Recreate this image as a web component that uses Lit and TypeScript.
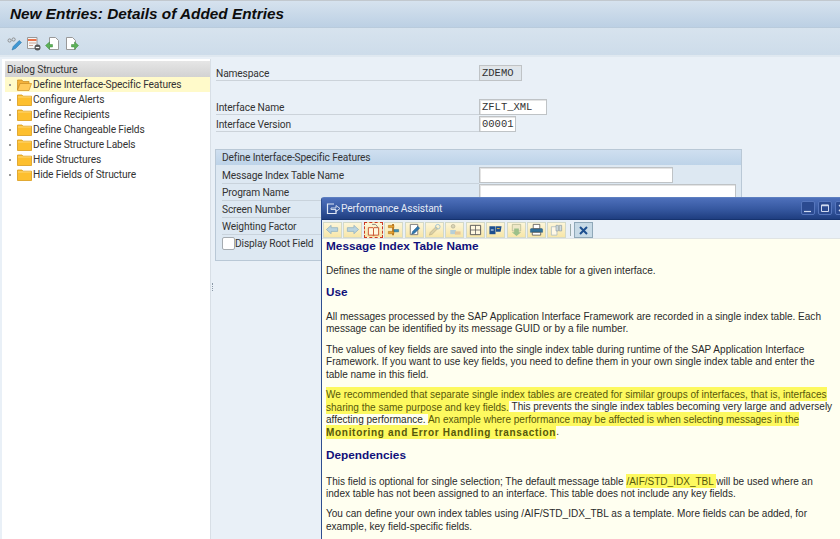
import { LitElement, html, css, svg } from "lit";
import { customElement } from "lit/decorators.js";

const folder = (open = false) => html`<svg class="folder" width="15" height="12" viewBox="0 0 15 12">
  ${open
    ? svg`<path d="M.5 2.500V1h4.500l1 1.500h6v2H3L.5 11z" fill="#f3b23c" stroke="#c98a1e" stroke-width=".7"/><path d="M3 4.500H14.500L12 11.500H.5z" fill="#ffca5c" stroke="#cf8f22" stroke-width=".7"/>`
    : svg`<path d="M.5 1h4.500l1 1.200h8.500v9.300H.5z" fill="#fdbf2e" stroke="#d99a1a" stroke-width=".8"/><path d="M1 3h13" stroke="#ffe08a" stroke-width=".8"/>`}
</svg>`;

const tbIcons = [
  svg`<path d="M1 4.500a1.600 1.600 0 1 1 3.200 0a1.600 1.600 0 1 1-3.200 0M5 3.500a1.600 1.600 0 1 1 3.200 0a1.600 1.600 0 1 1-3.200 0" fill="none" stroke="#888" stroke-width=".9"/><path d="M5 14l1.200-3.500 6-6 2.300 2-6 6z" fill="#3f97d3" stroke="#2a6f9f" stroke-width=".5"/>`,
  svg`<path d="M1.500 1.500h9.500v11H1.500z" fill="#f6f6f6" stroke="#999"/><path d="M2 3h8.500v2H2z" fill="#e9734a"/><path d="M3 7h7M3 9.500h4" stroke="#c9a292"/><circle cx="11.500" cy="11.500" r="3" fill="#555"/><path d="M9.800 11.500h3.400" stroke="#fff" stroke-width="1.200"/>`,
  svg`<path d="M4.500 1.500h6l3 3v9h-9z" fill="#fff" stroke="#999"/><path d="M.5 9.500l4-3.500v2.500h3V11h-3v2.500z" fill="#5cb158" stroke="#3f8a3b" stroke-width=".5"/>`,
  svg`<path d="M2.500 1.500h6l3 3v9h-9z" fill="#fff" stroke="#999"/><path d="M14.500 9.500l-4-3.500v2.500h-3V11h3v2.500z" fill="#5cb158" stroke="#3f8a3b" stroke-width=".5"/>`,
];

const pa = [
  svg`<path d="M1 7l5-4.500V5h7v4H6v2.500z" fill="#b9d3df" stroke="#8fb0c0" stroke-width=".8"/>`,
  svg`<path d="M14 7L9 2.500V5H2v4h7v2.500z" fill="#b9d3df" stroke="#8fb0c0" stroke-width=".8"/>`,
  svg`<path d="M2 5h5l.5 1 .5-1h5v8H8l-.5 1-.5-1H2z" fill="#fff8e0" stroke="#c8502c"/><path d="M7.500 6v7" stroke="#c8502c"/><path d="M6 1.500h3.500l2 2V5" fill="none" stroke="#666" stroke-width=".8"/>`,
  svg`<path d="M6 1h2v12H6z" fill="#b97722"/><path d="M2 2.500h6v2.500H2z" fill="#e8a02c" stroke="#9a6414" stroke-width=".5"/><path d="M8 7h5v2.500H8z" fill="#3f8fb5" stroke="#20617f" stroke-width=".5"/><path d="M2 9h6v2.500H2z" fill="#e8a02c" stroke="#9a6414" stroke-width=".5"/>`,
  svg`<path d="M3 1.500h8v11H3z" fill="#fff" stroke="#777"/><path d="M4.500 12l1-3L11 3.500 13 5.500 7.500 11z" fill="#2f76ad" stroke="#1d4f79" stroke-width=".5"/>`,
  svg`<path d="M2 13l1-3 6-6 2 2-6 6z" fill="#d8cfa8" stroke="#b7a97a" stroke-width=".6"/><circle cx="11" cy="4" r="2.500" fill="none" stroke="#9fc2d2"/>`,
  svg`<circle cx="6" cy="3.500" r="2" fill="#d8d4b8" stroke="#a8a488" stroke-width=".6"/><path d="M3 12V7.500h6V12z" fill="#b6cfd8"/><rect x="8" y="9" width="6" height="3.500" fill="#e6c89a"/>`,
  svg`<path d="M2 2.500h11v10H2z" fill="#fff8e0" stroke="#555"/><path d="M7.500 2.500v10M2 7.500h11" stroke="#555" stroke-width=".8"/>`,
  svg`<path d="M1 3.500h6.500v8.500H1z" fill="#1d4f8f"/><path d="M8 3.500h6l-1 6H8z" fill="#1d4f8f"/><path d="M2.500 7.500h3" stroke="#fff"/><path d="M9 6h3" stroke="#f1c24a"/>`,
  svg`<path d="M3 1.500h9v7H3z" fill="#eee8c8" stroke="#a9b08a" stroke-width=".7"/><path d="M5 6h5v4h2.500L7.500 14 2.500 10H5z" fill="#9cc08a"/>`,
  svg`<path d="M2 6h11a1 1 0 0 1 1 1v3H1V7a1 1 0 0 1 1-1z" fill="#2f6f9a" stroke="#1d4f79" stroke-width=".5"/><path d="M4 1.500h7V6H4z" fill="#fff" stroke="#333" stroke-width=".7"/><path d="M3 10h9v3H3z" fill="#fff" stroke="#333" stroke-width=".7"/>`,
  svg`<path d="M2 4h6v9H2z" fill="#fff8e6" stroke="#a8b8c0" stroke-width=".8"/><path d="M7 2.500h2.500v6H7zM10.500 2.500H13v6h-2.500z" fill="#d2dde2" stroke="#8a9aa2" stroke-width=".7"/>`,
];

@customElement("app-root")
export class AppRoot extends LitElement {
  static styles = css`
    :host { display: block; position: relative; width: 840px; height: 539px; overflow: hidden; background: #e9f0f7;
      font-family: Roboto, "Noto Sans", sans-serif; letter-spacing: -.14px; color: #2b2b2b; }
    .title { height: 28px; padding-left: 10px; box-sizing: border-box; display: flex; align-items: center;
      background: linear-gradient(#d6e2ee, #bcd0e4); border-top: 1px solid #c2c8ce; border-bottom: 1px solid #b9cbdc;
      font: italic bold 15.350px "Liberation Sans", Arial, sans-serif; letter-spacing: 0; color: #0d0d0d; }
    .toolbar { height: 29px; box-sizing: border-box; padding: 3px 0 0 7px; display: flex; align-items: center; gap: 4px;
      background: linear-gradient(#d7e3ee, #cddcea); border-bottom: 2px solid #dfe8f0; }
    .toolbar svg { display: block; }
    .body { display: flex; height: 482px; padding-top: 2px; box-sizing: border-box; }
    .tree { width: 209px; margin-left: 2px; background: #fff; box-sizing: border-box; border-right: 1px solid #d8dfe6; font-size: 10.200px; }
    .tree-head { height: 16px; margin: 2px 0 0 3px; padding-left: 2px; background: linear-gradient(#e6e6e6, #d2d2d2); display: flex; align-items: center; color: #333; }
    .node { height: 15px; margin-left: 3px; display: flex; align-items: center; white-space: nowrap; color: #333; }
    .node.sel { background: #fffaca; }
    .dot { width: 2px; height: 2px; background: #9a9a9a; margin: 0 6px 0 4px; flex: none; }
    .folder { margin-right: 1px; flex: none; }
    .split { width: 4px; display: flex; align-items: center; justify-content: center; }
    .grip { width: 1px; height: 8px; margin-top: -24px; border-left: 1px dotted #8a98a6; }
    .main { flex: 1; padding: 5px 0 0 1px; font-size: 10.200px; }
    .row { height: 17px; box-sizing: border-box; display: flex; align-items: flex-end; }
    .lab { width: 263px; height: 17px; box-sizing: border-box; border-bottom: 1px solid #ccd3da; display: flex; align-items: center; padding-top: 2px; white-space: nowrap; color: #333; }
    .gap { height: 17px; }
    .f { box-sizing: border-box; height: 16px; background: #fff; border: 1px solid #bfc3c6; font: 10.500px "Liberation Mono", monospace; letter-spacing: 0; padding-left: 2px; display: flex; align-items: center; color: #333; box-shadow: inset 1px 1px 0 #e4e4e4; }
    .f.ro { background: #dfe6ec; }
    .group { margin: 17px 0 0 -1px; width: 527px; height: 112px; box-sizing: border-box; border: 1px solid #b9c8d6; background: #dde8f2; }
    .g-head { height: 15px; background: linear-gradient(#cfdff0, #bdd3e8); padding-left: 6px; display: flex; align-items: center; color: #333; }
    .g-rows { padding: 2px 0 0 0; }
    .g-row { height: 17px; box-sizing: border-box; display: flex; }
    .g-lab { box-sizing: border-box; margin-left: 6px; width: 257px; height: 17px; border-bottom: 1px solid #c9d3dc; display: flex; align-items: center; white-space: nowrap; color: #333; }
    .check { width: 11px; height: 11px; border: 1px solid #a5abb0; border-radius: 2px; background: #fff; margin-right: 0; flex: none; }
    .g-lab.nb { border-bottom: 0; }

    .popup { position: absolute; left: 321px; top: 197px; width: 530px; height: 342px; box-sizing: border-box; background: #e9f0f7;
      border-left: 1px solid #2f4f8f; border-top: 1px solid #5d7fc0; border-top-left-radius: 3px; display: flex; flex-direction: column; }
    .p-title { height: 22px; flex: none; box-sizing: border-box; border-bottom: 1px solid #16336f; background: linear-gradient(#4e70bb, #35579f 55%, #1f3e80); display: flex; align-items: center; padding-left: 4px; color: #e4eaf5; font-size: 10.200px; position: relative; }
    .btns { position: absolute; left: 479px; top: 3px; display: flex; gap: 3px; }
    .wbtn { width: 14px; height: 14px; box-sizing: border-box; border: 1px solid #5676bd; border-radius: 2px; background: #2b4a90; display: flex; align-items: center; justify-content: center; }
    .p-tools { height: 18px; flex: none; display: flex; align-items: flex-end; padding-left: 1px; background: #e9f0f7; }
    .pb { width: 19px; height: 16px; box-sizing: border-box; background: linear-gradient(#fdf6da, #f7e6a8); border: 1px solid #d3d9c8; margin-right: 1.400px; display: flex; align-items: center; justify-content: center; flex: none; }
    .pb.act { border: 1px dashed #cc3a24; }
    .pb.close { background: #c7dae6; border: 1px solid #8fa8b8; margin-left: 3px; }
    .sep { width: 1px; height: 12px; background: #9aa; margin: 0 0 2px 2px; }
    .p-body { flex: 1; background: #fffff0; border-top: 1px solid #e0e4e4; padding: 0 0 0 4px; font: 10.040px/12.400px "Liberation Sans", Arial, sans-serif; letter-spacing: 0; color: #2a2a2a; }
    h2 { margin: 0 0 11px; font: bold 11.800px/15px "Liberation Sans", Arial, sans-serif; color: #10107a; }
    h2.mid { margin: 6px 0 10.500px; }
    h2.big { margin: 9.500px 0 12.500px; }
    p { margin: 0 0 8px; width: 509px; }
    mark { background: #fdf95f; color: #57570a; padding: 1.500px 0; box-decoration-break: clone; }
    mark b { letter-spacing: .68px; }
  `;

  render() {
    const nodes = [
      "Define Interface-Specific Features", "Configure Alerts", "Define Recipients",
      "Define Changeable Fields", "Define Structure Labels", "Hide Structures", "Hide Fields of Structure",
    ];
    return html`
      <div class="title">New Entries: Details of Added Entries</div>
      <div class="toolbar">
        ${tbIcons.map((d) => html`<svg width="15" height="15" viewBox="0 0 15 15">${d}</svg>`)}
      </div>
      <div class="body">
        <div class="tree">
          <div class="tree-head">Dialog Structure</div>
          ${nodes.map((n, i) => html`<div class="node ${i === 0 ? "sel" : ""}"><i class="dot"></i>${folder(i === 0)}<span>${n}</span></div>`)}
        </div>
        <div class="split"><i class="grip"></i></div>
        <div class="main">
          <div class="row"><div class="lab">Namespace</div><div class="f ro" style="width:43px">ZDEMO</div></div>
          <div class="gap"></div>
          <div class="row"><div class="lab">Interface Name</div><div class="f" style="width:68px">ZFLT_XML</div></div>
          <div class="row"><div class="lab">Interface Version</div><div class="f" style="width:37px">00001</div></div>
          <div class="group">
            <div class="g-head">Define Interface-Specific Features</div>
            <div class="g-rows">
              <div class="g-row"><div class="g-lab">Message Index Table Name</div><div class="f" style="width:194px"></div></div>
              <div class="g-row"><div class="g-lab">Program Name</div><div class="f" style="width:257px"></div></div>
              <div class="g-row"><div class="g-lab">Screen Number</div></div>
              <div class="g-row"><div class="g-lab">Weighting Factor</div></div>
              <div class="g-row"><div class="g-lab nb"><i class="check"></i>Display Root Field</div></div>
            </div>
          </div>
        </div>
      </div>
      <div class="popup">
        <div class="p-title">
          <svg width="15" height="13" viewBox="0 0 15 13"><path d="M8 2H1.500v9.500H10V8" fill="none" stroke="#dfe7f5" stroke-width="1.200"/><path d="M5 6h5V3.500L14 6.500 10 9.500V7.500H5z" fill="none" stroke="#dfe7f5" stroke-width=".9"/></svg>
          <span>Performance Assistant</span>
          <div class="btns">
            <i class="wbtn"><svg width="10" height="10" viewBox="0 0 10 10"><path d="M1 8.500h7" stroke="#cfd9ef" stroke-width="1.200"/></svg></i>
            <i class="wbtn"><svg width="10" height="10" viewBox="0 0 10 10"><path d="M1.500 2h7v6.500h-7z" fill="none" stroke="#cfd9ef"/><path d="M1.500 2.500h7" stroke="#cfd9ef" stroke-width="1.500"/></svg></i>
            <i class="wbtn"><svg width="10" height="10" viewBox="0 0 10 10"><path d="M2 2l6 6M8 2l-6 6" stroke="#cfd9ef" stroke-width="1.300"/></svg></i>
          </div>
        </div>
        <div class="p-tools">
          ${pa.map((d, i) => html`<div class="pb ${i === 2 ? "act" : ""}"><svg width="15" height="14" viewBox="0 0 15 15">${d}</svg></div>`)}
          <i class="sep"></i>
          <div class="pb close"><svg width="13" height="13" viewBox="0 0 13 13"><path d="M3 3l7 7M10 3l-7 7" stroke="#1d4f8f" stroke-width="2"/></svg></div>
        </div>
        <div class="p-body">
          <h2>Message Index Table Name</h2>
          <p>Defines the name of the single or multiple index table for a given interface.</p>
          <h2 class="mid">Use</h2>
          <p>All messages processed by the SAP Application Interface Framework are recorded in a single index table. Each message can be identified by its message GUID or by a file number.</p>
          <p>The values of key fields are saved into the single index table during runtime of the SAP Application Interface Framework. If you want to use key fields, you need to define them in your own single index table and enter the table name in this field.</p>
          <p><mark>We recommended that separate single index tables are created for similar groups of interfaces, that is, interfaces sharing the same purpose and key fields.</mark> This prevents the single index tables becoming very large and adversely affecting performance. <mark>An example where performance may be affected is when selecting messages in the <b>Monitoring and Error Handling transaction</b></mark>.</p>
          <h2 class="big">Dependencies</h2>
          <p>This field is optional for single selection; The default message table <mark>/AIF/STD_IDX_TBL </mark>will be used where an index table has not been assigned to an interface. This table does not include any key fields.</p>
          <p>You can define your own index tables using /AIF/STD_IDX_TBL as a template. More fields can be added, for example, key field-specific fields.</p>
        </div>
      </div>
    `;
  }
}
